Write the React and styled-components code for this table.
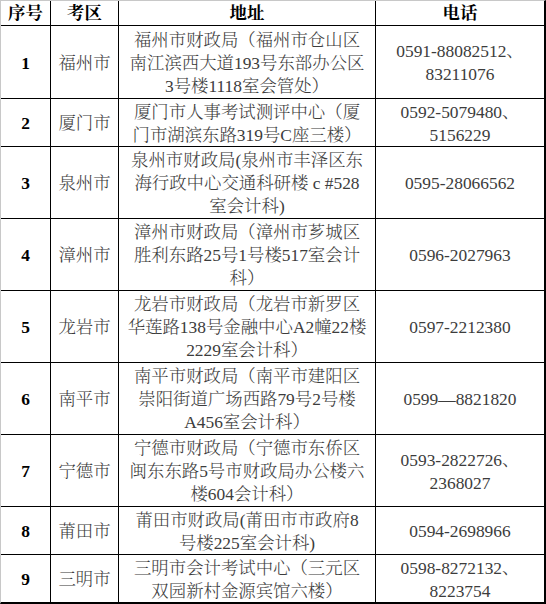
import React from "react";
import styled, { createGlobalStyle } from "styled-components";

const GlobalStyle = createGlobalStyle`
  html, body { margin: 0; padding: 0; background: #ffffff; }
  body {
    font-family: "Liberation Serif", "Noto Serif CJK SC", "Noto Sans CJK SC", serif;
  }
`;

const Table = styled.div`
  display: grid;
  grid-template-columns: 49px 67px 256px 168px;
  grid-template-rows: 24px 72px 47px 71px 71px 71px 71px 71px 47px 47px;
  gap: 1px;
  width: max-content;
  background: #000;
  border-left: 1px solid #c8c8c8;
  border-top: 1px solid #c8c8c8;
  border-right: 2px solid #000;
  border-bottom: 2px solid #000;
`;

const Cell = styled.div`
  background: #fff;
  display: flex;
  flex-direction: column;
  align-items: center;
  justify-content: center;
  font-family: "Liberation Serif", "Noto Serif CJK SC", "Noto Sans CJK SC", serif;
  font-size: 17.4px;
  line-height: 23px;
  white-space: nowrap;
  text-align: center;
  color: ${(p) => (p.$strong ? "#000" : "#3c3c3c")};
  font-weight: ${(p) => (p.$strong ? 700 : 300)};
  padding-top: ${(p) => (p.$head ? "1px" : "2px")};
`;

const Line = styled.span`
  display: block;
`;

const rows = [
  {
    n: "1",
    city: "福州市",
    addr: ["福州市财政局（福州市仓山区", "南江滨西大道193号东部办公区", "3号楼1118室会管处）"],
    tel: ["0591-88082512、", "83211076"],
  },
  {
    n: "2",
    city: "厦门市",
    addr: ["厦门市人事考试测评中心（厦", "门市湖滨东路319号C座三楼）"],
    tel: ["0592-5079480、", "5156229"],
  },
  {
    n: "3",
    city: "泉州市",
    addr: ["泉州市财政局(泉州市丰泽区东", "海行政中心交通科研楼 c #528", "室会计科)"],
    tel: ["0595-28066562"],
  },
  {
    n: "4",
    city: "漳州市",
    addr: ["漳州市财政局（漳州市芗城区", "胜利东路25号1号楼517室会计", "科）"],
    tel: ["0596-2027963"],
  },
  {
    n: "5",
    city: "龙岩市",
    addr: ["龙岩市财政局（龙岩市新罗区", "华莲路138号金融中心A2幢22楼", "2229室会计科）"],
    tel: ["0597-2212380"],
  },
  {
    n: "6",
    city: "南平市",
    addr: ["南平市财政局（南平市建阳区", "崇阳街道广场西路79号2号楼", "A456室会计科）"],
    tel: ["0599—8821820"],
  },
  {
    n: "7",
    city: "宁德市",
    addr: ["宁德市财政局（宁德市东侨区", "闽东东路5号市财政局办公楼六", "楼604会计科）"],
    tel: ["0593-2822726、", "2368027"],
  },
  {
    n: "8",
    city: "莆田市",
    addr: ["莆田市财政局(莆田市市政府8", "号楼225室会计科)"],
    tel: ["0594-2698966"],
  },
  {
    n: "9",
    city: "三明市",
    addr: ["三明市会计考试中心（三元区", "双园新村金源宾馆六楼）"],
    tel: ["0598-8272132、", "8223754"],
  },
];

const headers = ["序号", "考区", "地址", "电话"];

export default function App() {
  return (
    <>
      <GlobalStyle />
      <Table>
        {headers.map((h) => (
          <Cell key={h} $strong $head>
            {h}
          </Cell>
        ))}
        {rows.map((r) => (
          <React.Fragment key={r.n}>
            <Cell $strong>{r.n}</Cell>
            <Cell>{r.city}</Cell>
            <Cell>
              {r.addr.map((l, i) => (
                <Line key={i}>{l}</Line>
              ))}
            </Cell>
            <Cell>
              {r.tel.map((l, i) => (
                <Line key={i}>{l}</Line>
              ))}
            </Cell>
          </React.Fragment>
        ))}
      </Table>
    </>
  );
}
